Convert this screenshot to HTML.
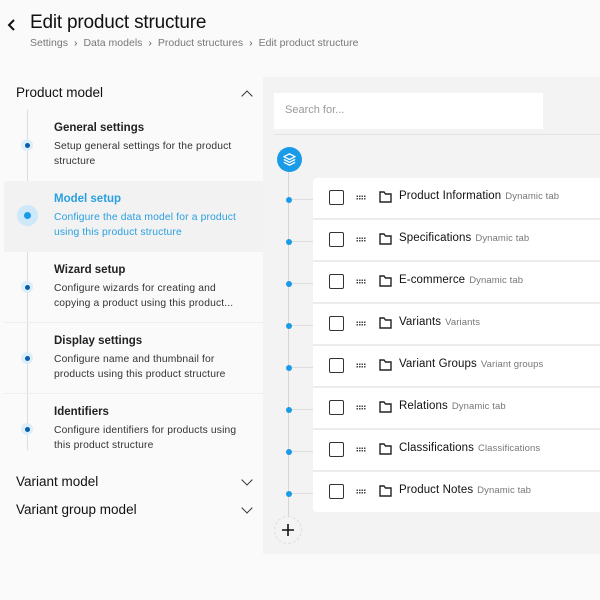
<!DOCTYPE html>
<html><head><style>
*{margin:0;padding:0;box-sizing:border-box}
body{width:600px;height:600px;background:#fafafa;font-family:"Liberation Sans",sans-serif;position:relative;overflow:hidden;color:#1a1a1a}
.a{position:absolute}
h1{position:absolute;left:30px;top:12px;font-size:19px;font-weight:normal;letter-spacing:-0.2px;color:#111}
.bc{left:30px;top:37px;font-size:10.5px;color:#777}
.bc span{margin:0 6px;color:#555}
.sec{font-size:13.5px;color:#111;left:16px}
.chev{left:243px;width:8px;height:8px;border-left:1.5px solid #333;border-top:1.5px solid #333}
.it{left:4px;width:259px;height:71px}
.it b{position:absolute;left:50px;top:12px;font-size:11.5px;font-weight:bold;color:#222}
.it p{position:absolute;left:50px;top:30px;font-size:10.3px;line-height:14.5px;color:#333;width:190px;letter-spacing:0.15px}
.dot{position:absolute;left:17px;width:12px;height:12px;border-radius:50%;background:#dceefa}
.dot:after{content:"";position:absolute;left:3.5px;top:3.5px;width:5px;height:5px;border-radius:50%;background:#0a5ea8}
.row{left:313px;width:287px;height:40px;background:#fff}
.cb{position:absolute;left:16px;top:12px;width:15px;height:15px;border:1.5px solid #333;border-radius:2px}
.dr{position:absolute;left:43px;top:17px;width:10px;height:5px;background:radial-gradient(circle,#444 0.8px,transparent 1px) 0 0/2.5px 2.5px}
.fd{position:absolute;left:66px;top:13px}
.nm{position:absolute;left:86px;top:12px;font-size:11.5px;color:#111;white-space:nowrap;letter-spacing:0.1px}
.nm i{font-style:normal;font-size:9.5px;color:#777;margin-left:4px}
.rd{position:absolute;left:286px;width:6px;height:6px;border-radius:50%;background:#1a9be8}
.hl{position:absolute;left:292px;width:21px;height:1px;background:#ddd}
</style></head><body>
<svg class="a" style="left:6px;top:18px" width="12" height="14" viewBox="0 0 12 14"><path d="M8 2 L3 7 L8 12" fill="none" stroke="#111" stroke-width="2"/></svg>
<h1>Edit product structure</h1>
<div class="a bc">Settings<span>›</span>Data models<span>›</span>Product structures<span>›</span>Edit product structure</div>

<div class="a sec" style="top:85px">Product model</div>
<div class="a chev" style="top:92px;transform:rotate(45deg)"></div>
<div class="a" style="left:27px;top:110px;width:1px;height:340px;background:#ddd"></div>
<div class="a it" style="top:110px"><div class="dot" style="top:29px"></div><b>General settings</b><p>Setup general settings for the product structure</p></div>
<div class="a it" style="top:181px;background:#f2f2f2"><div class="a" style="left:13px;top:24px;width:21px;height:21px;border-radius:50%;background:#cde8f8"></div><div class="a" style="left:20px;top:31px;width:7px;height:7px;border-radius:50%;background:#1a9be8"></div><b style="color:#2a9fe0">Model setup</b><p style="color:#2a9fe0">Configure the data model for a product using this product structure</p></div>
<div class="a it" style="top:252px;border-bottom:1px solid #eee"><div class="dot" style="top:29px"></div><b>Wizard setup</b><p>Configure wizards for creating and copying a product using this product...</p></div>
<div class="a it" style="top:323px;border-bottom:1px solid #eee"><div class="dot" style="top:29px"></div><b>Display settings</b><p>Configure name and thumbnail for products using this product structure</p></div>
<div class="a it" style="top:394px"><div class="dot" style="top:29px"></div><b>Identifiers</b><p>Configure identifiers for products using this product structure</p></div>
<div class="a sec" style="top:474px">Variant model</div>
<div class="a chev" style="top:476px;transform:rotate(225deg)"></div>
<div class="a sec" style="top:502px">Variant group model</div>
<div class="a chev" style="top:504px;transform:rotate(225deg)"></div>

<div class="a" style="left:263px;top:77px;width:337px;height:477px;background:#f3f3f3"></div>
<div class="a" style="left:274px;top:93px;width:269px;height:36px;background:#fff;font-size:11px;color:#999;padding:11px 11px">Search for...</div>
<div class="a" style="left:274px;top:134px;width:326px;height:1px;background:#e2e2e2"></div>
<div class="a" style="left:288px;top:170px;width:1px;height:348px;background:#d6d6d6"></div>
<div class="a" style="left:277px;top:147px;width:25px;height:25px;border-radius:50%;background:#1a9be8"></div>
<svg class="a" style="left:282px;top:152px" width="15" height="15" viewBox="0 0 16 16"><g fill="none" stroke="#fff" stroke-width="1.4" stroke-linejoin="round"><path d="M8 2 L14 5 L8 8 L2 5 Z"/><path d="M2 8 L8 11 L14 8"/><path d="M2 11 L8 14 L14 11"/></g></svg>
<div class="a" style="left:313px;top:178px;width:287px;height:334px;background:#ececec;border-radius:4px 0 0 4px"></div>

<div class="a row" style="top:178px;border-radius:4px 0 0 0"><div class="cb"></div><div class="dr"></div><svg class="fd" width="13" height="12" viewBox="0 0 13 12"><path d="M1 1H5L6.5 3H12V11H1Z" fill="none" stroke="#222" stroke-width="1.4"/></svg><div class="nm">Product Information<i>Dynamic tab</i></div></div>
<div class="rd" style="top:197px"></div><div class="hl" style="top:199px"></div>
<div class="a row" style="top:220px"><div class="cb"></div><div class="dr"></div><svg class="fd" width="13" height="12" viewBox="0 0 13 12"><path d="M1 1H5L6.5 3H12V11H1Z" fill="none" stroke="#222" stroke-width="1.4"/></svg><div class="nm">Specifications<i>Dynamic tab</i></div></div>
<div class="rd" style="top:239px"></div><div class="hl" style="top:241px"></div>
<div class="a row" style="top:262px"><div class="cb"></div><div class="dr"></div><svg class="fd" width="13" height="12" viewBox="0 0 13 12"><path d="M1 1H5L6.5 3H12V11H1Z" fill="none" stroke="#222" stroke-width="1.4"/></svg><div class="nm">E-commerce<i>Dynamic tab</i></div></div>
<div class="rd" style="top:281px"></div><div class="hl" style="top:283px"></div>
<div class="a row" style="top:304px"><div class="cb"></div><div class="dr"></div><svg class="fd" width="13" height="12" viewBox="0 0 13 12"><path d="M1 1H5L6.5 3H12V11H1Z" fill="none" stroke="#222" stroke-width="1.4"/></svg><div class="nm">Variants<i>Variants</i></div></div>
<div class="rd" style="top:323px"></div><div class="hl" style="top:325px"></div>
<div class="a row" style="top:346px"><div class="cb"></div><div class="dr"></div><svg class="fd" width="13" height="12" viewBox="0 0 13 12"><path d="M1 1H5L6.5 3H12V11H1Z" fill="none" stroke="#222" stroke-width="1.4"/></svg><div class="nm">Variant Groups<i>Variant groups</i></div></div>
<div class="rd" style="top:365px"></div><div class="hl" style="top:367px"></div>
<div class="a row" style="top:388px"><div class="cb"></div><div class="dr"></div><svg class="fd" width="13" height="12" viewBox="0 0 13 12"><path d="M1 1H5L6.5 3H12V11H1Z" fill="none" stroke="#222" stroke-width="1.4"/></svg><div class="nm">Relations<i>Dynamic tab</i></div></div>
<div class="rd" style="top:407px"></div><div class="hl" style="top:409px"></div>
<div class="a row" style="top:430px"><div class="cb"></div><div class="dr"></div><svg class="fd" width="13" height="12" viewBox="0 0 13 12"><path d="M1 1H5L6.5 3H12V11H1Z" fill="none" stroke="#222" stroke-width="1.4"/></svg><div class="nm">Classifications<i>Classifications</i></div></div>
<div class="rd" style="top:449px"></div><div class="hl" style="top:451px"></div>
<div class="a row" style="top:472px;border-radius:0 0 0 4px"><div class="cb"></div><div class="dr"></div><svg class="fd" width="13" height="12" viewBox="0 0 13 12"><path d="M1 1H5L6.5 3H12V11H1Z" fill="none" stroke="#222" stroke-width="1.4"/></svg><div class="nm">Product Notes<i>Dynamic tab</i></div></div>
<div class="rd" style="top:491px"></div><div class="hl" style="top:493px"></div>

<div class="a" style="left:274px;top:516px;width:28px;height:28px;border-radius:50%;border:1px dashed #ddd;background:#f3f3f3"></div>
<svg class="a" style="left:281px;top:523px" width="14" height="14" viewBox="0 0 14 14"><path d="M7 1V13M1 7H13" stroke="#111" stroke-width="1.6"/></svg>
</body></html>
